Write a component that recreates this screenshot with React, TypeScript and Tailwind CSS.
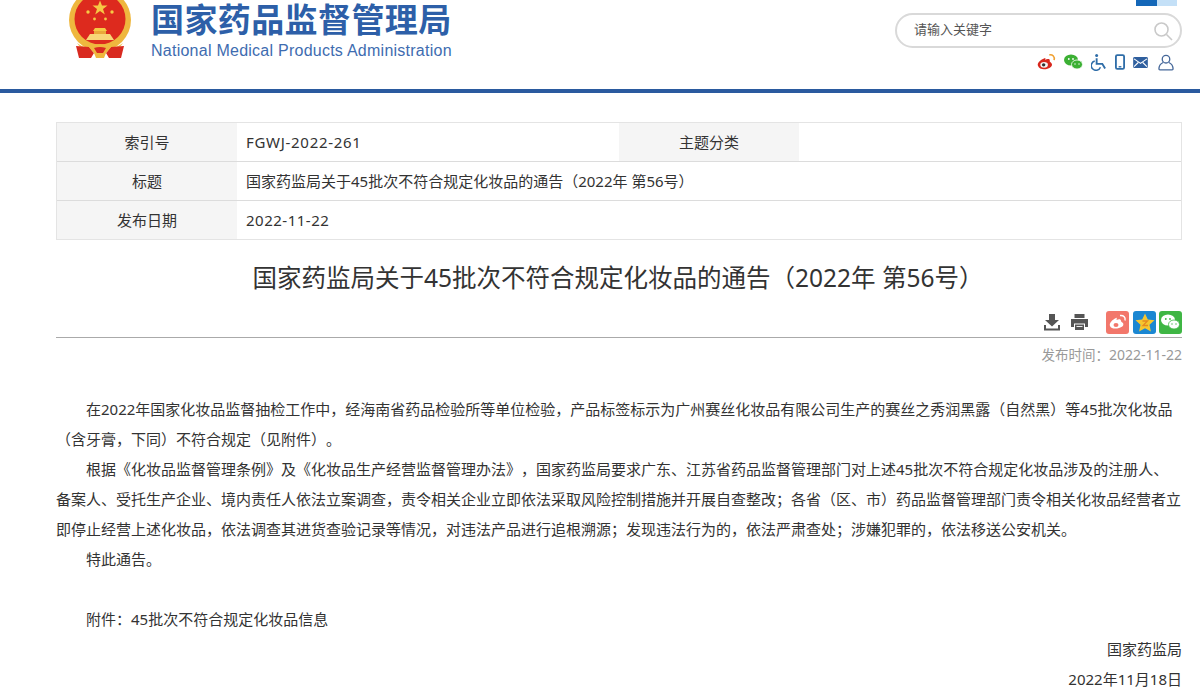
import React from 'react';

const FONT = "font-['Noto_Sans','Noto_Sans_CJK_SC',sans-serif] [text-spacing-trim:space-all]";

const rows = [
  { label: '索引号', value: 'FGWJ-2022-261', extraLabel: '主题分类', track: 'tracking-[0.7px]' },
  { label: '标题', value: '国家药监局关于45批次不符合规定化妆品的通告（2022年 第56号）', track: '' },
  { label: '发布日期', value: '2022-11-22', track: 'tracking-[0.5px]' },
];

// 国徽
const Emblem = () => (
  <svg width="64" height="60" viewBox="0 0 64 60">
    <circle cx="32" cy="20" r="31" fill="#efb73e" />
    <circle cx="32" cy="19" r="25.500" fill="#dd2a1e" />
    <polygon points="32,0.500 34,5.500 39.500,5.500 35,9 36.800,14.500 32,11 27.200,14.500 29,9 24.500,5.500 30,5.500" fill="#f6c945" />
    <circle cx="20" cy="12" r="1.700" fill="#f6c945" />
    <circle cx="44" cy="12" r="1.700" fill="#f6c945" />
    <circle cx="26.500" cy="19" r="1.400" fill="#f6c945" />
    <circle cx="37.500" cy="19" r="1.400" fill="#f6c945" />
    {/* 天安门 */}
    <path d="M25 31 L27 28 H37 L39 31 Z" fill="#f6c945" />
    <rect x="26" y="31" width="12" height="3" fill="#e9a93a" />
    <path d="M22 34 H42 L46 40 H18 Z" fill="#f8d778" />
    <path d="M9 43 C16 48 24 50 32 50 C40 50 48 48 55 43 L52 47 C44 51 20 51 12 47 Z" fill="#f4c14a" />
    {/* 绶带 */}
    <path d="M8 46 L21 47 L26 53 L23 58 L11 58 Z" fill="#d92a20" />
    <path d="M56 46 L43 47 L38 53 L41 58 L53 58 Z" fill="#d92a20" />
    <path d="M20 46 Q32 42 44 46 L38 53 L36 58 H28 L26 53 Z" fill="#efb73e" />
    <path d="M26 48 Q32 46 38 48 L35 53 H29 Z" fill="#d92a20" />
  </svg>
);

const TopIcons = () => (
  <div className="flex items-center justify-end h-[22px] pr-[8px]">
    <svg width="19" height="18" viewBox="0 0 20 18" className="mr-[8px]">
      <path d="M8 5 C3 7 0 10 1 13 C2 17 8 17 11 16 C15 15 17 12 15 10 C14 9 13 9 13.500 7.500 C13.500 5.500 11 5.500 8.500 6.500 C9 5 9 4.500 8 5 Z" fill="#d8261c" />
      <ellipse cx="7.500" cy="12" rx="4" ry="3" fill="#f3f3f3" />
      <circle cx="7" cy="12" r="1.800" fill="#333" />
      <path d="M13 1.500 C16.500 1 19 3.500 18 7" stroke="#f0a030" strokeWidth="1.600" fill="none" />
    </svg>
    <svg width="19" height="16" viewBox="0 0 19 16" className="mr-[8px]">
      <ellipse cx="7" cy="6" rx="7" ry="5.500" fill="#3cb034" />
      <ellipse cx="13" cy="10.500" rx="5.500" ry="4.500" fill="#3cb034" stroke="#fff" strokeWidth="0.800" />
      <circle cx="4.800" cy="5" r="0.900" fill="#fff" />
      <circle cx="9" cy="5" r="0.900" fill="#fff" />
      <circle cx="11" cy="10" r="0.700" fill="#fff" />
      <circle cx="15" cy="10" r="0.700" fill="#fff" />
    </svg>
    <svg width="16" height="18" viewBox="0 0 17 18" fill="none" stroke="#2f6da8" strokeWidth="2" className="mr-[8px]">
      <circle cx="6" cy="2" r="1.600" fill="#2f6da8" stroke="none" />
      <path d="M6 5 V11 H12 L15 16" />
      <path d="M4 8 A5 5 0 1 0 10 14.500" strokeWidth="1.600" />
    </svg>
    <svg width="10" height="16" viewBox="0 0 11 17" fill="none" className="mr-[8px]">
      <rect x="1" y="1" width="9" height="15" rx="1.500" stroke="#2f6da8" strokeWidth="2" />
      <rect x="4" y="13" width="3" height="1.500" fill="#2f6da8" />
    </svg>
    <svg width="15" height="11" viewBox="0 0 16 12" className="mr-[10px]">
      <rect width="16" height="12" rx="1.500" fill="#2f5f9e" />
      <path d="M1 2 L8 7 L15 2 M1 10.500 L5.500 6 M15 10.500 L10.500 6" stroke="#fff" strokeWidth="1.200" fill="none" />
    </svg>
    <svg width="16" height="17" viewBox="0 0 17 17" fill="none" stroke="#46689a" strokeWidth="1.400">
      <circle cx="8.500" cy="5" r="4" />
      <path d="M5.500 8.500 C2 10 1 12.500 1 15.500 C1 16 1.500 16.300 2 16.300 H15 C15.500 16.300 16 16 16 15.500 C16 12.500 15 10 11.500 8.500" />
    </svg>
  </div>
);

const Header = () => (
  <header className="h-[93px] border-b-4 border-[#2a5a9f] relative">
    <div className="flex justify-between pr-[18px] pl-[68px]">
      <div className="flex">
        <Emblem />
        <div className="ml-[19px] w-[302px]">
          <div className="text-[33px] leading-[40px] font-bold text-[#2d5fa8] tracking-[0.4px] whitespace-nowrap">国家药品监督管理局</div>
          <div className="text-[16px] leading-[20px] mt-[1px] text-[#3e6cb0] whitespace-nowrap font-['Liberation_Sans',sans-serif] tracking-[0.25px]">National Medical Products Administration</div>
        </div>
      </div>
      <div className="w-[287px] mt-[13px]">
        <div className="h-[35px] border-2 border-[#d9d9d9] rounded-[18px] flex items-center justify-between pl-[17px] pr-[7px]">
          <span className="text-[13px] text-[#555] -mt-[2px]">请输入关键字</span>
          <svg width="20" height="20" viewBox="0 0 20 20" fill="none" stroke="#c9c9c9" strokeWidth="1.600">
            <circle cx="8.500" cy="8.500" r="6.500" />
            <path d="M13.500 13.500 L19 19" />
          </svg>
        </div>
        <div className="mt-[3px]">
          <TopIcons />
        </div>
      </div>
    </div>
    <div className="absolute top-0 right-[23px] flex h-[6px]">
      <div className="w-[21px] bg-[#1467b8]" />
      <div className="w-[20px] bg-[#c4e0f7]" />
    </div>
  </header>
);

const InfoTable = () => (
  <div className="mt-[29px] border border-[#e4e4e4] text-[15px] text-[#333]">
    {rows.map((row, i) => (
      <div key={row.label} className={`flex items-center ${i > 0 ? 'h-[39px] border-t border-[#dcdcdc]' : 'h-[38px]'}`}>
        <div className="w-[180px] h-full flex items-center justify-center bg-[#f5f5f5]">{row.label}</div>
        <div className="flex-1 h-full flex items-center pl-[9px]">
          {row.extraLabel ? (
            <>
              <span className={`w-[373px] ${row.track}`}>{row.value}</span>
              <div className="w-[180px] h-[38px] flex items-center justify-center bg-[#f5f5f5]">{row.extraLabel}</div>
            </>
          ) : (
            <span className={row.track}>{row.value}</span>
          )}
        </div>
      </div>
    ))}
  </div>
);

const ShareBar = () => (
  <div className="flex items-center justify-end h-[24px] mt-[14px]">
    <svg width="18" height="18" viewBox="0 0 18 18" fill="#555" className="mr-[9px]">
      <path d="M6 1 H12 V7 H16 L9 13.500 L2 7 H6 Z" />
      <path d="M1 12 H3 V15.500 H15 V12 H17 V17.500 H1 Z" />
    </svg>
    <svg width="19" height="18" viewBox="0 0 19 18" className="mr-[17px]">
      <path d="M4.500 1 H14.500 V5 H4.500 Z M1 6 H18 V14 H15 V10.500 H4 V14 H1 Z" fill="#555" />
      <rect x="5" y="11.500" width="9" height="5.500" fill="#555" />
      <rect x="6.500" y="13" width="6" height="0.900" fill="#fff" />
    </svg>
    <div className="flex gap-[3px]">
      <div className="w-[23px] h-[23px] mr-[1px] rounded-[3px] bg-[#f2776b] flex items-center justify-center">
        <svg width="18" height="16" viewBox="0 0 18 16">
          <path d="M7 4 C3 6 0 9 1 12 C2 15 7 15 10 14 C14 13 15 11 14 9 C13 8 12 8 12 7 C12 5 10 5 7.500 6 C8 4.500 8 3.500 7 4 Z" fill="#fff" />
          <ellipse cx="7" cy="11" rx="2.500" ry="2" fill="#f2776b" />
          <path d="M11 1.500 C14.500 1 17 3.500 16 6.500" stroke="#fff" strokeWidth="1.500" fill="none" />
        </svg>
      </div>
      <div className="w-[23px] h-[23px] rounded-[3px] bg-[#1b87d2] flex items-center justify-center">
        <svg width="20" height="19" viewBox="0 0 20 19">
          <polygon points="10,0.500 12.800,6.500 19.500,7.300 14.500,11.800 15.900,18.500 10,15.200 4.100,18.500 5.500,11.800 0.500,7.300 7.200,6.500" fill="#f6c62f" />
          <path d="M7.500 8 H12.500 L8 12.500 H13" stroke="#e58a1f" strokeWidth="1.300" fill="none" />
        </svg>
      </div>
      <div className="w-[23px] h-[23px] rounded-[3px] bg-[#3fb644] flex items-center justify-center">
        <svg width="19" height="16" viewBox="0 0 19 16">
          <ellipse cx="7" cy="6" rx="7" ry="5.500" fill="#fff" />
          <ellipse cx="13" cy="10.500" rx="5.500" ry="4.500" fill="#fff" stroke="#3fb644" strokeWidth="0.800" />
          <circle cx="4.800" cy="5" r="0.900" fill="#3fb644" />
          <circle cx="9" cy="5" r="0.900" fill="#3fb644" />
          <circle cx="11" cy="10" r="0.700" fill="#3fb644" />
          <circle cx="15" cy="10" r="0.700" fill="#3fb644" />
        </svg>
      </div>
    </div>
  </div>
);

export default function App() {
  return (
    <div className={`w-[1200px] h-[695px] overflow-hidden bg-white ${FONT}`}>
      <Header />
      <main className="pr-[18px] pl-[56px]">
        <InfoTable />
        <h1 className="mt-[20px] text-[24.5px] leading-[36px] text-center text-[#333] font-normal pr-[2px] whitespace-nowrap">
          国家药监局关于45批次不符合规定化妆品的通告（2022年 第56号）
        </h1>
        <ShareBar />
        <div className="mt-[3px] border-t border-[#aaa] pt-[6px] text-right text-[14px] leading-[21px] text-[#999]">
          <span className="text-[13.5px]">发布时间：</span>2022-11-22
        </div>
        <div className="mt-[28px] text-[15px] leading-[30px] text-[#333]">
          <p className="indent-[30px]">
            在2022年国家化妆品监督抽检工作中，经海南省药品检验所等单位检验，产品标签标示为广州赛丝化妆品有限公司生产的赛丝之秀润黑露（自然黑）等45批次化妆品（含牙膏，下同）不符合规定（见附件）。
          </p>
          <p className="indent-[30px]">
            根据《化妆品监督管理条例》及《化妆品生产经营监督管理办法》，国家药监局要求广东、江苏省药品监督管理部门对上述45批次不符合规定化妆品涉及的注册人、备案人、受托生产企业、境内责任人依法立案调查，责令相关企业立即依法采取风险控制措施并开展自查整改；各省（区、市）药品监督管理部门责令相关化妆品经营者立即停止经营上述化妆品，依法调查其进货查验记录等情况，对违法产品进行追根溯源；发现违法行为的，依法严肃查处；涉嫌犯罪的，依法移送公安机关。
          </p>
          <p className="indent-[30px]">特此通告。</p>
          <p className="indent-[30px] mt-[30px]">附件：45批次不符合规定化妆品信息</p>
          <p className="text-right">国家药监局</p>
          <p className="text-right">2022年11月18日</p>
        </div>
      </main>
    </div>
  );
}
